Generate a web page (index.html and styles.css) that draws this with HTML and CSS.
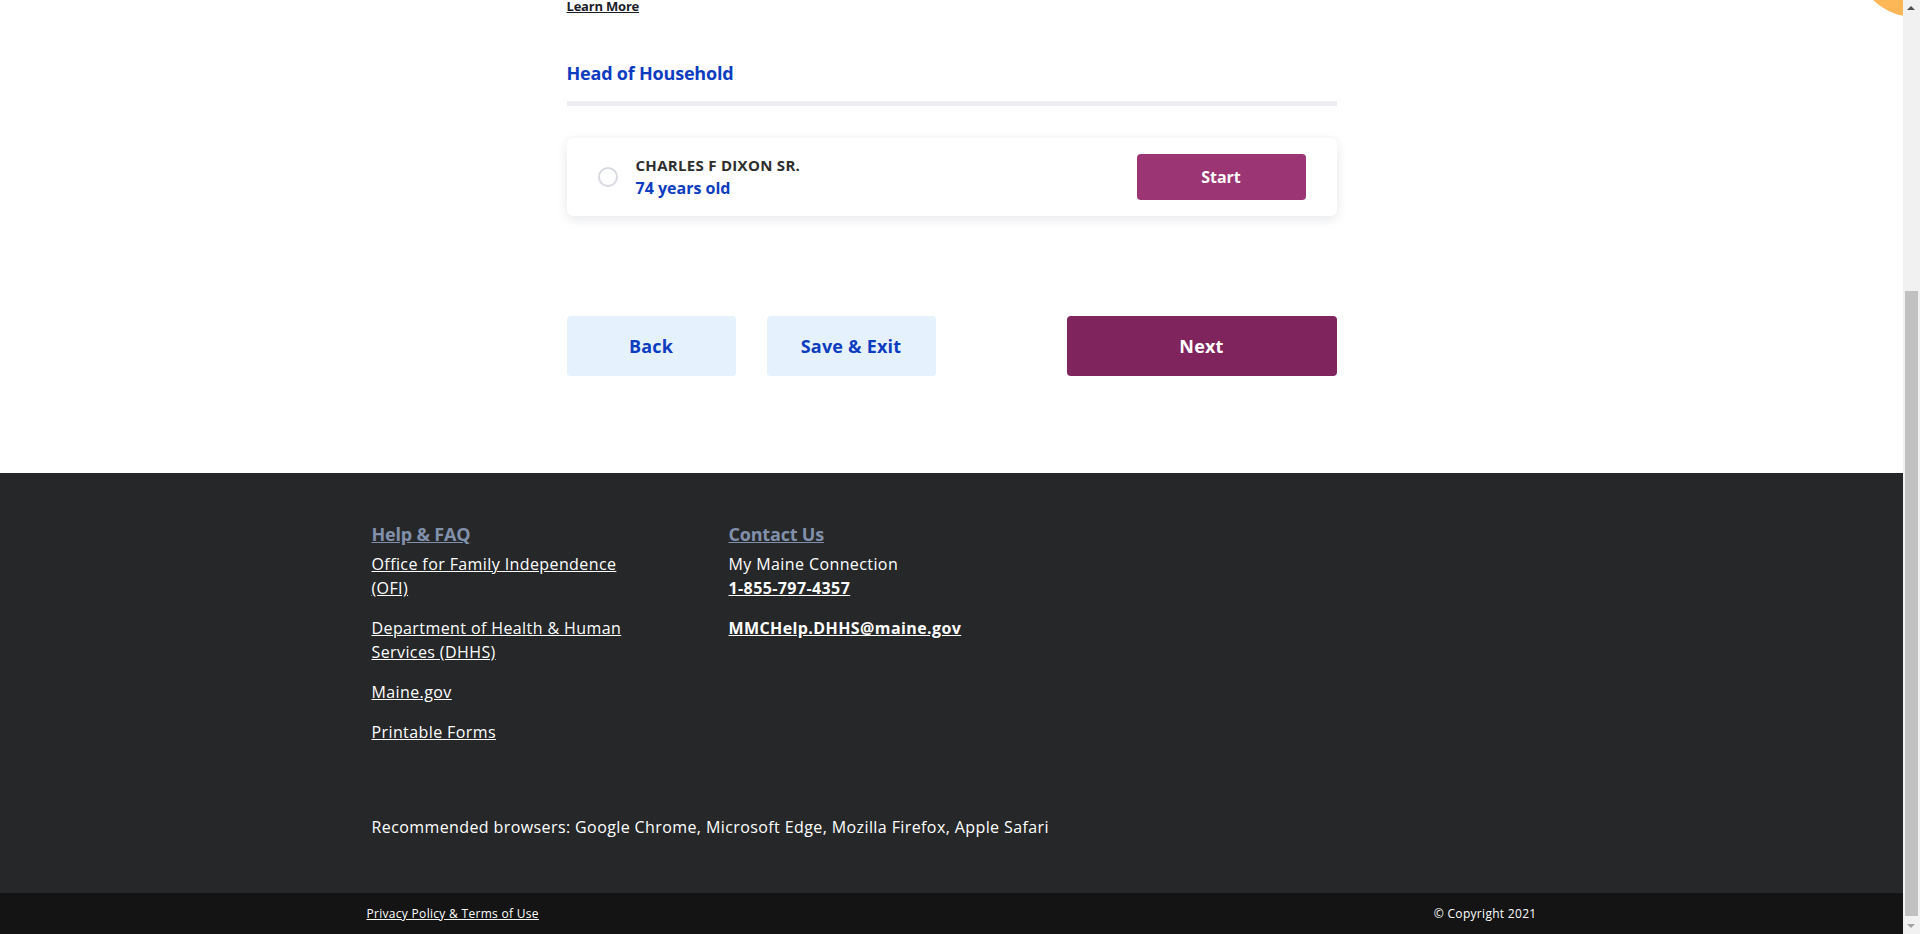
FILE: index.html
```html
<!DOCTYPE html>
<html lang="en">
<head>
<meta charset="utf-8">
<title>Head of Household</title>
<link rel="stylesheet" href="styles.css">
</head>
<body>
<div class="window">
  <div class="viewport">
    <div class="orange-blob"></div>
    <main class="main">
      <a class="learn-more" href="#">Learn More</a>
      <h2 class="section-title">Head of Household</h2>
      <div class="rule"></div>
      <div class="person-card">
        <span class="radio"></span>
        <div class="person-info">
          <div class="person-name">CHARLES F DIXON SR.</div>
          <div class="person-age">74 years old</div>
        </div>
        <button class="btn-start" type="button">Start</button>
      </div>
      <div class="nav-buttons">
        <button class="btn-light" type="button">Back</button>
        <button class="btn-light" type="button">Save &amp; Exit</button>
        <button class="btn-next" type="button">Next</button>
      </div>
    </main>
    <footer class="footer">
      <div class="footer-inner">
        <div class="footer-cols">
          <div class="footer-col col-help">
            <a class="footer-heading" href="#">Help &amp; FAQ</a>
            <ul class="footer-list">
              <li><a href="#">Office for Family Independence (OFI)</a></li>
              <li><a href="#">Department of Health &amp; Human Services (DHHS)</a></li>
              <li><a href="#">Maine.gov</a></li>
              <li><a href="#">Printable Forms</a></li>
            </ul>
          </div>
          <div class="footer-col">
            <a class="footer-heading" href="#">Contact Us</a>
            <ul class="footer-list">
              <li>My Maine Connection<br><a class="strong-link" href="#">1-855-797-4357</a></li>
              <li><a class="strong-link" href="#">MMCHelp.DHHS@maine.gov</a></li>
            </ul>
          </div>
        </div>
        <p class="browsers">Recommended browsers: Google Chrome, Microsoft Edge, Mozilla Firefox, Apple Safari</p>
      </div>
      <div class="bottom-bar">
        <div class="bottom-inner">
          <a href="#">Privacy Policy &amp; Terms of Use</a>
          <span>&copy; Copyright 2021</span>
        </div>
      </div>
    </footer>
  </div>
  <div class="scrollbar">
    <div class="sb-btn sb-up"></div>
    <div class="sb-track"><div class="sb-thumb"></div></div>
    <div class="sb-btn sb-down"></div>
  </div>
</div>
</body>
</html>
```

FILE: styles.css
```css
* { box-sizing: border-box; }
html, body { margin: 0; padding: 0; }
body {
  font-family: "Open Sans", "Liberation Sans", sans-serif;
  color: #222;
  background: #fff;
  height: 934px;
  overflow: hidden;
}
.window {
  display: flex;
  height: 934px;
}
.viewport {
  flex: 1;
  position: relative;
  overflow: hidden;
  display: flex;
  flex-direction: column;
}
.orange-blob {
  position: absolute;
  left: 1855px;
  top: -103px;
  width: 120px;
  height: 120px;
  border-radius: 50%;
  background: #fdb757;
}
.main {
  width: 770px;
  margin: 0 auto;
  display: flex;
  flex-direction: column;
  padding-bottom: 97px;
}
.learn-more {
  display: block;
  margin-top: -1px;
  font-size: 13px;
  line-height: 14px;
  font-weight: 700;
  color: #1c1c2a;
  letter-spacing: -0.2px;
  align-self: flex-start;
}
.section-title {
  margin: 48px 0 0;
  font-size: 18px;
  line-height: 24px;
  font-weight: 700;
  color: #0c3cc0;
  letter-spacing: -0.2px;
}
.rule {
  margin-top: 16px;
  height: 5px;
  background: #edeef1;
}
.person-card {
  margin-top: 32px;
  height: 78px;
  display: flex;
  align-items: center;
  padding: 0 31px;
  background: #fff;
  border-radius: 6px;
  box-shadow: 0 3px 12px rgba(30, 40, 60, 0.11);
}
.radio {
  width: 20px;
  height: 20px;
  border-radius: 50%;
  border: 2px solid #d7dae0;
  flex: none;
}
.person-info {
  margin-left: 18px;
  flex: 1;
  display: flex;
  flex-direction: column;
}
.person-name {
  font-size: 15px;
  line-height: 22px;
  font-weight: 700;
  color: #2d2d2d;
  letter-spacing: 0.3px;
}
.person-age {
  font-size: 16px;
  line-height: 24px;
  font-weight: 700;
  color: #0c3cc0;
  letter-spacing: 0;
}
.btn-start {
  width: 169px;
  height: 46px;
  border: 0;
  border-radius: 4px;
  background: #9c3574;
  color: #fff;
  font-family: inherit;
  font-size: 16px;
  font-weight: 700;
}
.nav-buttons {
  margin-top: 100px;
  display: flex;
  gap: 31px;
}
.btn-light, .btn-next {
  height: 60px;
  border: 0;
  border-radius: 4px;
  font-family: inherit;
  font-size: 18px;
  font-weight: 700;
  letter-spacing: 0.2px;
}
.btn-light {
  width: 169px;
  background: #e6f1fe;
  color: #0c3cc0;
}
.btn-next {
  width: 270px;
  margin-left: auto;
  background: #80245e;
  color: #fff;
}
.footer {
  flex: 1;
  background: #262729;
  color: #fff;
  display: flex;
  flex-direction: column;
}
.footer-inner {
  width: 1200px;
  margin: 0 auto;
  padding: 49px 15px 54px 20px;
  flex: 1;
}
.footer-cols {
  display: flex;
}
.footer-col {
  display: flex;
  flex-direction: column;
}
.col-help {
  width: 357px;
  padding-right: 80px;
}
.footer-heading {
  font-size: 18px;
  line-height: 24px;
  font-weight: 700;
  color: #8190ab;
  letter-spacing: -0.2px;
  margin-bottom: 6px;
  align-self: flex-start;
}
.footer-list {
  list-style: none;
  margin: 0;
  padding: 0;
  display: flex;
  flex-direction: column;
  gap: 16px;
}
.footer-list li {
  font-size: 16px;
  line-height: 24px;
  letter-spacing: 0.4px;
}
.footer-list a {
  color: #fff;
}
.footer-list .strong-link {
  font-weight: 700;
}
.browsers {
  margin: 71px 0 0;
  font-size: 16px;
  line-height: 24px;
  letter-spacing: 0.4px;
}
.bottom-bar {
  background: #141414;
  height: 42px;
}
.bottom-inner {
  width: 1200px;
  height: 42px;
  margin: 0 auto;
  padding: 0 15px;
  display: flex;
  justify-content: space-between;
  align-items: center;
  font-size: 12px;
  line-height: 18px;
  letter-spacing: 0.3px;
}
.bottom-inner a {
  color: #fff;
}
.scrollbar {
  width: 17px;
  flex: none;
  background: #f1f1f1;
  display: flex;
  flex-direction: column;
}
.sb-btn {
  height: 17px;
  position: relative;
  flex: none;
}
.sb-up::after, .sb-down::after {
  content: "";
  position: absolute;
  left: 4px;
  width: 0;
  height: 0;
  border-left: 4px solid transparent;
  border-right: 4px solid transparent;
}
.sb-up::after {
  top: 6px;
  border-bottom: 4px solid #505050;
}
.sb-down::after {
  top: 7px;
  border-top: 4px solid #a3a3a3;
}
.sb-track {
  flex: 1;
  padding: 274px 2px 0;
}
.sb-thumb {
  height: 625px;
  background: #c1c1c1;
}
```
